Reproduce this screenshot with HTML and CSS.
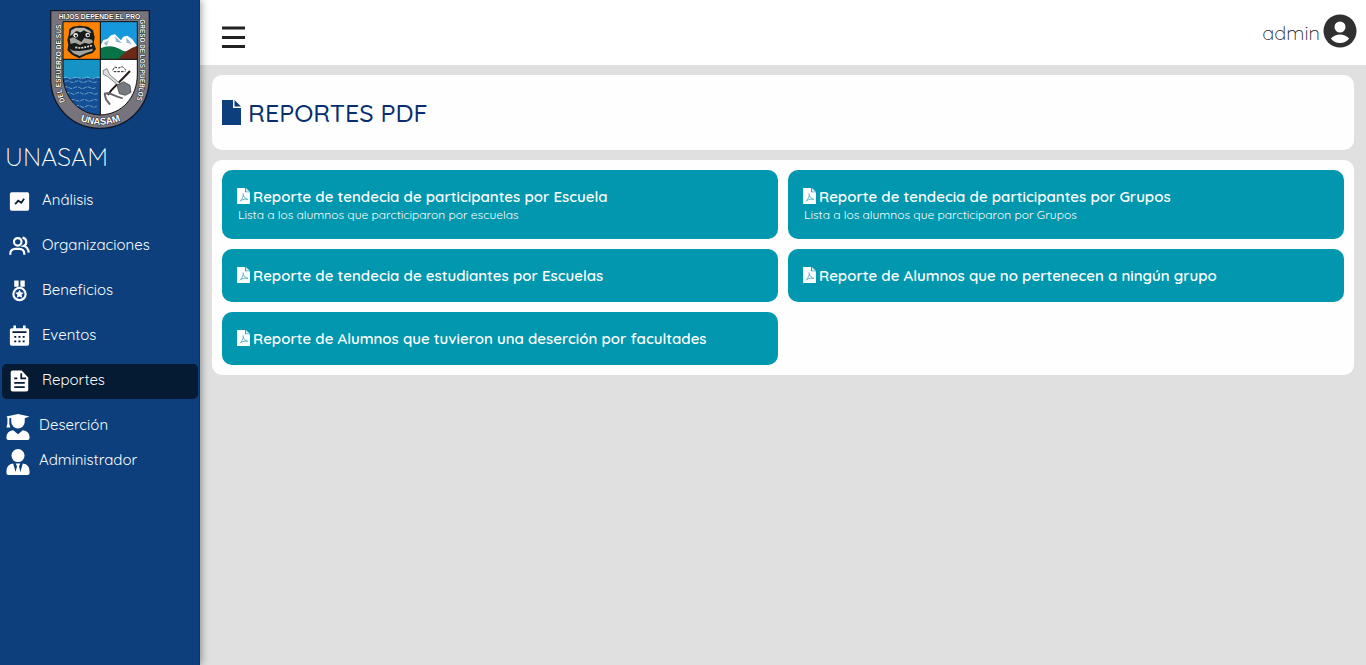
FILE: index.html
```html
<!DOCTYPE html>
<html lang="es">
<head>
<meta charset="utf-8">
<title>Reportes PDF</title>
<link rel="stylesheet" href="styles.css">
</head>
<body>
<div class="app">
  <aside class="sidebar">
    <svg class="crest" viewBox="30 30 300 357">
      <defs>
        <clipPath id="shield"><path d="M69 65H292V222C292 292 246 343 181 345C116 343 69 292 69 222Z"/></clipPath>
        <path id="left" d="M75 304C66 285 62 262 62 235V70"/>
        <path id="right" d="M300 58V220C300 255 297 275 289 304"/>
        <path id="bottom" d="M116 361Q181 388 248 360"/>
      </defs>
      <path class="crest-edge" d="M32 32H328V235C328 322 262 385 180 385C98 385 32 322 32 235Z"/>
      <g clip-path="url(#shield)">
        <path fill="#ff8200" d="M69 65H181V178H69Z"/>
        <path fill="#1593c4" d="M69 178H181V236H69Z"/>
        <path fill="#124f94" d="M69 234H181V345H69Z"/>
        <path fill="#1598dc" d="M181 65H292V150H181Z"/>
        <path fill="#fff" d="M181 178H292V345H181Z"/>
        <path fill="#fff" d="M181 139L190 120L202 117L213 106L225 103L243 121L250 110L262 107L276 117L292 139V153H181Z"/>
        <path fill="#91bbd0" d="M191 130L207 121L200 138ZM225 108L246 130L228 125ZM259 113L276 132L259 128Z"/>
        <path fill="#087347" d="M181 145Q213 130 245 150L292 178H181Z"/>
        <path fill="#692a19" d="M235 178Q257 148 292 137V178Z"/>
        <path class="wave" d="M69 234q8-5 16 0t16 0 16 0 16 0 16 0 16 0 16 0M74 245q8-5 16 0t16 0 16 0 16 0 16 0 16 0M71 263q8-5 16 0t16 0 16 0 16 0 16 0 16 0M77 280q8-5 16 0t16 0 16 0 16 0 16 0 16 0M92 301q8-5 16 0t16 0 16 0 16 0 16 0M106 319q8-5 16 0t16 0 16 0 16 0"/>
        <path fill="#171a18" d="M88 88L98 80L120 77L144 80L159 91L164 112L161 130L168 147L158 159L138 165L118 175L96 164L82 151L85 135L82 120L86 106Z"/>
        <path fill="#b6b9b1" d="M94 90L108 83L132 83L151 93L154 100L141 96L132 91L122 97L109 93L99 102L90 108Z"/>
        <path fill="#a3a69f" d="M89 116L100 112L113 119L124 126L133 114L156 119L159 127L148 132L134 128L120 135L105 128L92 132ZM88 146L100 152L119 153L142 150L159 146L157 153L138 159L119 168L100 160Z"/>
        <circle cx="107" cy="106" r="7" fill="#eee"/><circle cx="143" cy="105" r="7" fill="#ddd"/>
        <circle cx="108" cy="107" r="3"/><circle cx="144" cy="106" r="3"/>
        <path fill="none" stroke="#dedfd7" stroke-width="5" stroke-dasharray="6 3" d="M106 142L122 144L143 140L157 136"/>
        <path fill="none" stroke="#241819" stroke-width="6" d="M204 285L213 272L270 213"/>
        <path fill="none" stroke="#66666b" stroke-width="6" d="M192 281L206 279L232 290L248 295M194 281L198 298L210 314"/>
        <path fill="#ddd" stroke="#555" stroke-width="2" d="M189 212L201 206L209 224L242 252L236 257L202 229L190 223Z"/>
        <path fill="#777a80" stroke="#333" stroke-width="2" d="M231 256L251 245L270 256L273 277L256 286L238 281Z"/>
        <path fill="none" stroke="#272727" stroke-width="3" stroke-dasharray="8 3" d="M218 211L224 201L236 204L247 200L258 211M221 215H256"/>
        <path fill="none" stroke="#080808" stroke-width="3" d="M181 65V345M69 178H292"/>
      </g>
      <path fill="none" stroke="#111" stroke-width="3" d="M69 65H292V222C292 292 246 343 181 345C116 343 69 292 69 222Z"/>
      <text class="motto" x="56" y="57" textLength="245" lengthAdjust="spacingAndGlyphs">HIJOS DEPENDE EL PRO</text>
      <text class="motto"><textPath href="#left" textLength="232" lengthAdjust="spacingAndGlyphs">DEL ESFUERZO DE SUS</textPath></text>
      <text class="motto"><textPath href="#right" textLength="244" lengthAdjust="spacingAndGlyphs">GRESO DE LOS PUEBLOS</textPath></text>
      <text class="motto motto-name"><textPath href="#bottom" startOffset="5" textLength="124">UNASAM</textPath></text>
    </svg>
    <div class="brand">UNASAM</div>
    <nav class="menu">
      <a class="item"><svg class="icon" viewBox="0 0 24 24"><path d="M3 2h18a2 2 0 0 1 2 2v17a2 2 0 0 1-2 2H3a2 2 0 0 1-2-2V4a2 2 0 0 1 2-2z"/><path class="cut" d="M7 15.500l3.500-4 3.500 2.500 3.300-4.500"/></svg><span>Análisis</span></a>
      <a class="item"><svg class="icon" viewBox="0 0 24 24"><g class="line"><circle cx="10" cy="7.200" r="4.300"/><path d="M1.500 22v-1.500a5.500 5.500 0 0 1 5.500-5.300h5a5.500 5.500 0 0 1 5.500 5.300V22M15.500 2.500a5 5 0 0 1 1.300 9.500q5 1 5.700 7.500"/></g></svg><span>Organizaciones</span></a>
      <a class="item"><svg class="icon" viewBox="0 0 24 24"><path d="M6 0h5v7H6zM13 0h5v7h-5z"/><circle class="line" cx="12" cy="15.500" r="7"/><path d="M12 10.500l1.500 3 3.400.5-2.500 2.400.7 3.400-3.100-1.600-3.100 1.600.7-3.400L7.100 14l3.400-.5z"/></svg><span>Beneficios</span></a>
      <a class="item"><svg class="icon" viewBox="0 0 24 24"><path d="M5 0h3v3h8V0h3v3h2a2 2 0 0 1 2 2v16a2 2 0 0 1-2 2H3a2 2 0 0 1-2-2V5a2 2 0 0 1 2-2h2z"/><path class="cut" d="M4 7.500h16M6 13h2.300m2.500 0h2.300m2.500 0h2.300M6 18h2.300m2.500 0h2.300m2.500 0h2.300"/></svg><span>Eventos</span></a>
      <a class="item active"><svg class="icon" viewBox="0 0 24 24"><path d="M4 0h10.500L22 8v14a2 2 0 0 1-2 2H4a2 2 0 0 1-2-2V2a2 2 0 0 1 2-2z"/><path class="cut" d="M14 3v6h5.500M6 9h3.500M6 14h12M6 19h12"/></svg><span>Reportes</span></a>
      <a class="item person"><svg class="icon" viewBox="0 0 24 27"><path d="M0 2.500L12 0l12 2.500-5 2V8a7 7 0 0 1-14 0V4.500L3 4v6l1 4H0l1-4V4zM0 25v-1q0-6 7-7l5 4 5-4q7 1 7 7v1a2 2 0 0 1-2 2H2a2 2 0 0 1-2-2z"/></svg><span>Deserción</span></a>
      <a class="item person last"><svg class="icon" viewBox="0 0 24 27"><circle cx="12" cy="6.800" r="6.800"/><path d="M0 25v-2q0-7 7-8l2.500 9L11 18l-1.500-3h5L13 18l1.500 6L17 15q7 1 7 8v2a2 2 0 0 1-2 2H2a2 2 0 0 1-2-2z"/></svg><span>Administrador</span></a>
    </nav>
  </aside>
  <div class="page">
    <header class="topbar">
      <svg class="burger" viewBox="0 0 24 24"><path d="M0 3h23M0 12.500h23M0 21.500h23"/></svg>
      <div class="user"><span>admin</span><svg class="avatar" viewBox="0 0 34 34"><circle cx="17" cy="17" r="16.500" fill="#303030"/><circle cx="17" cy="13" r="5.500" fill="#fff"/><path fill="#fff" d="M7.800 24.500Q12 20.500 17 20.500T26.200 24.500Q22.500 29 17 29T7.800 24.500Z"/></svg></div>
    </header>
    <main class="content">
      <section class="card heading"><svg class="file" viewBox="0 0 19 25"><path d="M0 0h11v8h8v17H0zM12.500 0L19 6.500h-6.500z"/></svg><h1>REPORTES PDF</h1></section>
      <section class="card grid">
        <a class="tile"><div class="title"><svg class="pdf" viewBox="0 0 12 15"><path fill="#fff" d="M0 0h7.500v4H12v11H0z"/><path fill="#cfe9ec" d="M8.300 0L12 3.400H8.300z"/><path class="mark" d="M5.500 5c1 2-.5 5-3 7.500M5.700 6.500c.6 2 2 3.500 4.300 4.200-2.500-.6-4.500-.2-6.500 1"/></svg><span>Reporte de tendecia de participantes por Escuela</span></div><p>Lista a los alumnos que parcticiparon por escuelas</p></a>
        <a class="tile"><div class="title"><svg class="pdf" viewBox="0 0 12 15"><path fill="#fff" d="M0 0h7.500v4H12v11H0z"/><path fill="#cfe9ec" d="M8.300 0L12 3.400H8.300z"/><path class="mark" d="M5.500 5c1 2-.5 5-3 7.500M5.700 6.500c.6 2 2 3.500 4.300 4.200-2.500-.6-4.500-.2-6.500 1"/></svg><span>Reporte de tendecia de participantes por Grupos</span></div><p>Lista a los alumnos que parcticiparon por Grupos</p></a>
        <a class="tile"><div class="title"><svg class="pdf" viewBox="0 0 12 15"><path fill="#fff" d="M0 0h7.500v4H12v11H0z"/><path fill="#cfe9ec" d="M8.300 0L12 3.400H8.300z"/><path class="mark" d="M5.500 5c1 2-.5 5-3 7.500M5.700 6.500c.6 2 2 3.500 4.300 4.200-2.500-.6-4.500-.2-6.500 1"/></svg><span>Reporte de tendecia de estudiantes por Escuelas</span></div></a>
        <a class="tile"><div class="title"><svg class="pdf" viewBox="0 0 12 15"><path fill="#fff" d="M0 0h7.500v4H12v11H0z"/><path fill="#cfe9ec" d="M8.300 0L12 3.400H8.300z"/><path class="mark" d="M5.500 5c1 2-.5 5-3 7.500M5.700 6.500c.6 2 2 3.500 4.300 4.200-2.500-.6-4.500-.2-6.500 1"/></svg><span>Reporte de Alumnos que no pertenecen a ningún grupo</span></div></a>
        <a class="tile"><div class="title"><svg class="pdf" viewBox="0 0 12 15"><path fill="#fff" d="M0 0h7.500v4H12v11H0z"/><path fill="#cfe9ec" d="M8.300 0L12 3.400H8.300z"/><path class="mark" d="M5.500 5c1 2-.5 5-3 7.500M5.700 6.500c.6 2 2 3.500 4.300 4.200-2.500-.6-4.500-.2-6.500 1"/></svg><span>Reporte de Alumnos que tuvieron una deserción por facultades</span></div></a>
      </section>
    </main>
  </div>
</div>
</body>
</html>
```
FILE: styles.css
```css
* { box-sizing: border-box; }
body { margin: 0; font-family: Quicksand, Lato, "Open Sans", sans-serif; background: #e0e0e0; overflow: hidden; }
.app { display: flex; height: 665px; }
.sidebar { position: relative; z-index: 1; width: 200px; flex: none; padding-top: 10px; background: #0c3f7c; border-right: 1px solid #0a326b; box-shadow: 1px 0 8px rgba(0,0,0,.4); color: #fff; }
.crest { display: block; width: 100px; height: 119px; margin-left: 50px; }
.crest-edge { fill: #77747e; stroke: #111827; stroke-width: 4; }
.wave { fill: none; stroke: #a6cce5; stroke-width: 2; stroke-dasharray: 12 3; }
.motto { fill: #fff; stroke: #222; stroke-width: 3; paint-order: stroke; font: bold 22px "Liberation Sans", sans-serif; }
.motto-name { font-size: 29px; }
.brand { height: 55px; padding: 11px 0 0 5px; font-size: 25px; line-height: 33px; font-weight: 300; }
.menu { display: flex; flex-direction: column; gap: 10px; padding: 0 1px 0 2px; }
.item { display: flex; align-items: center; height: 35px; padding-left: 7px; border-radius: 5px; font-size: 15px; line-height: 20px; }
.item span { margin: -3px 0 0 12px; white-space: nowrap; }
.active { background: #051a33; }
.icon { width: 21px; height: 22px; margin-top: -2px; fill: #fff; flex: none; }
.line { fill: none; stroke: #fff; stroke-width: 2.5; }
.cut { fill: none; stroke: #051a33; stroke-width: 2; }
.person { padding-left: 4px; }
.person .icon { width: 24px; height: 26px; margin-top: 0; }
.person span { margin-left: 9px; }
.last { margin-top: -10px; }
.page { flex: 1; min-width: 0; }
.topbar { display: flex; align-items: center; justify-content: space-between; height: 65px; padding: 0 9px 0 22px; background: #fff; }
.burger { width: 24px; height: 24px; margin-top: 8px; stroke: #222; stroke-width: 3.2; }
.user { display: flex; align-items: center; gap: 3px; font-size: 20px; font-weight: 300; color: #222; margin-top: -3px; }
.user span { margin-top: 2px; }
.avatar { width: 34px; height: 34px; }
.content { display: flex; flex-direction: column; gap: 10px; padding: 10px 12px; }
.card { background: #fefefe; border-radius: 10px; }
.heading { display: flex; align-items: center; gap: 7px; height: 75px; padding-left: 10px; color: #072e70; }
.file { width: 19px; height: 25px; fill: #0c3f7c; }
h1 { margin: 0; font-size: 25px; font-weight: 500; }
.grid { display: grid; grid-template-columns: 1fr 1fr; gap: 10px; padding: 10px; }
.tile { min-height: 53px; padding: 16px 15px; border-radius: 10px; background: #0097af; color: #fff; white-space: nowrap; }
.title { display: flex; align-items: center; gap: 3px; height: 21px; font-size: 15px; font-weight: 600; }
.pdf { width: 13px; height: 16px; margin-top: -1px; }
.mark { fill: none; stroke: #42adbc; stroke-width: .8; }
.tile p { margin: 0 0 0 1px; font-size: 12px; line-height: 16px; font-weight: 400; }
```
